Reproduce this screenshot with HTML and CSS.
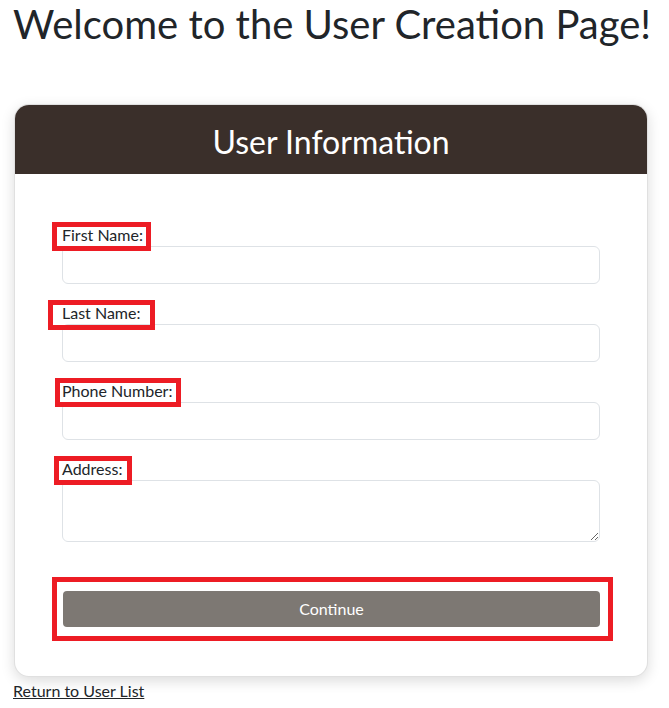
FILE: index.html
```html
<!DOCTYPE html>
<html lang="en">
<head>
<meta charset="utf-8">
<title>Create User</title>
<link rel="stylesheet" href="styles.css">
</head>
<body>
<main class="page">
  <h1 class="page-title">Welcome to the User Creation Page!</h1>
  <section class="card">
    <header class="card-header">
      <h2 class="card-title">User Information</h2>
    </header>
    <form class="card-body">
      <div class="field">
        <label class="field-label mark mark-first" for="first">First Name:</label>
        <input class="field-input" id="first" type="text">
      </div>
      <div class="field">
        <label class="field-label mark mark-last" for="last">Last Name:</label>
        <input class="field-input" id="last" type="text">
      </div>
      <div class="field">
        <label class="field-label mark mark-phone" for="phone">Phone Number:</label>
        <input class="field-input" id="phone" type="text">
      </div>
      <div class="field">
        <label class="field-label mark mark-address" for="address">Address:</label>
        <textarea class="field-input field-textarea" id="address" rows="2"></textarea>
      </div>
      <div class="actions">
        <button class="btn-continue" type="button">Continue</button>
      </div>
    </form>
  </section>
  <a class="back-link" href="#">Return to User List</a>
</main>
</body>
</html>
```
FILE: styles.css
```css
*, *::before, *::after { box-sizing: border-box; }
html, body { margin: 0; padding: 0; background: #fff; }
body {
  font-family: "Lato", sans-serif;
  color: #212529;
  font-size: 16px;
  line-height: 1.5;
}
.page { padding: 0 13px; }
.page-title {
  margin: 0;
  font-size: 40px;
  font-weight: 400;
  line-height: 48px;
}
.card {
  margin: 56px 0 2px 1px;
  width: 634px;
  background: #fff;
  border: 1px solid rgba(0,0,0,0.12);
  border-radius: 15px;
  box-shadow: 0 4px 14px rgba(0,0,0,0.14);
  overflow: hidden;
}
.card-header {
  background: #3a2f2a;
  padding: 18px 0 13px;
}
.card-title {
  margin: 0;
  color: #fff;
  text-align: center;
  font-size: 32px;
  font-weight: 400;
  line-height: 38px;
}
.card-body {
  padding: 50px 47px 35px;
  display: flex;
  flex-direction: column;
}
.field {
  display: flex;
  flex-direction: column;
  align-items: flex-start;
  margin-bottom: 18px;
}
.field-label {
  line-height: 22px;
  font-size: 16px;
}
.mark { position: relative; }
.mark::after {
  content: "";
  position: absolute;
  border: 5px solid #ed1c24;
  top: -2px;
  height: 29px;
  pointer-events: none;
}
.mark-first::after { left: -10px; width: 99px; }
.mark-last::after { left: -14px; width: 107px; height: 30px; }
.mark-phone::after { left: -7px; width: 126px; }
.mark-address::after { left: -8px; width: 78px; }
.field-input {
  width: 100%;
  height: 38px;
  padding: 6px 12px;
  font: inherit;
  color: #212529;
  background: #fff;
  border: 1px solid #dee2e6;
  border-radius: 6px;
  outline: none;
}
.field-textarea {
  height: 62px;
  resize: vertical;
  display: block;
}
.actions {
  position: relative;
  margin-top: 17px;
  padding: 14px 0 14px 1px;
}
.actions::after {
  content: "";
  position: absolute;
  left: -10px;
  right: -13px;
  top: 0;
  bottom: 0;
  border: 5px solid #ed1c24;
  pointer-events: none;
}
.btn-continue {
  display: block;
  width: 100%;
  height: 36px;
  border: 0;
  border-radius: 4px;
  background: #7d7873;
  color: #fff;
  font-family: "Lato", sans-serif;
  font-size: 16px;
  line-height: 24px;
}
.back-link {
  display: inline-block;
  color: #212529;
  text-decoration: underline;
  line-height: 24px;
}
```
